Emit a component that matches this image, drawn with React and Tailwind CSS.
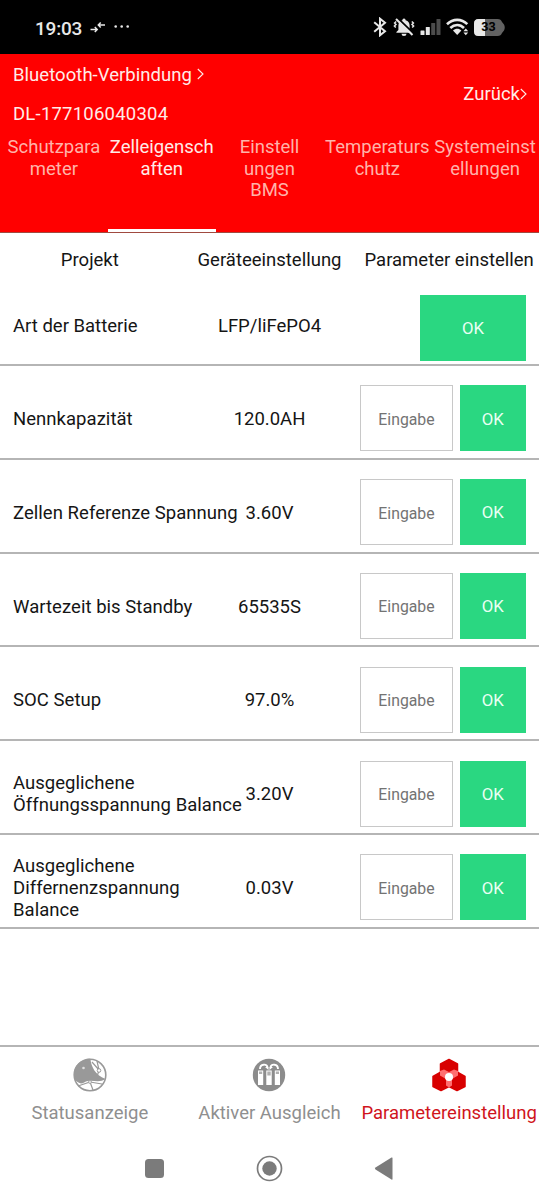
import React, { useState } from 'react';
import clsx from 'clsx';

const TABS = [
  'Schutzpara\nmeter',
  'Zelleigensch\naften',
  'Einstell\nungen\nBMS',
  'Temperaturs\nchutz',
  'Systemeinst\nellungen',
];

const COLUMNS = ['Projekt', 'Geräteeinstellung', 'Parameter einstellen'];

const SETTINGS = [
  { label: 'Nennkapazität', value: '120.0AH' },
  { label: 'Zellen Referenze Spannung', value: '3.60V' },
  { label: 'Wartezeit bis Standby', value: '65535S' },
  { label: 'SOC Setup', value: '97.0%' },
  { label: 'Ausgeglichene\nÖffnungsspannung Balance', value: '3.20V' },
  { label: 'Ausgeglichene\nDiffernenzspannung\nBalance', value: '0.03V' },
];

function StatusBar() {
  return (
    <div className="h-[54px] shrink-0 bg-black text-[#e8e8e8] flex items-center justify-between pl-[35px] pr-[34px]">
      <div className="flex items-center">
        <span className="mt-[2px] text-[19px] font-medium leading-none tracking-[-0.2px]">19:03</span>
        <svg className="ml-2 w-4 h-4" viewBox="0 0 16 16" fill="none" stroke="currentColor" strokeWidth="1.5">
          <path d="M0.5 10.5H7M4.8 8L7.2 10.5L4.8 13" />
          <path d="M15 6H8.5M10.7 3.5L8.3 6L10.7 8.5" />
        </svg>
        <svg className="ml-2 w-4 h-4" viewBox="0 0 16 16" fill="currentColor">
          <circle cx="1.7" cy="7.5" r="1.3" />
          <circle cx="7.7" cy="7.5" r="1.3" />
          <circle cx="13.7" cy="7.5" r="1.3" />
        </svg>
      </div>

      <div className="flex items-center">
        {/* Bluetooth */}
        <svg className="w-[14px] h-5" viewBox="0 0 14 20" fill="none" stroke="currentColor" strokeWidth="2">
          <path d="M1.2 5.2L12 14.3L7 18.3V1.7L12 5.7L1.2 14.8" />
        </svg>
        {/* Muted bell */}
        <svg className="ml-[6px] w-[22px] h-5" viewBox="0 0 22 20">
          <path d="M11 1.5a1.6 1.6 0 0 1 1.600 1.700C15.400 4 16.600 6 16.600 8.600V13l2 2v.8H3.400V15l2-2V8.600C5.400 6 6.600 4 9.400 3.200A1.600 1.600 0 0 1 11 1.500zM8.500 16.700h5a2.500 2.300 0 0 1-5 0z" fill="currentColor" />
          <path d="M3.200 4.500L1.600 6L3 7.500L1.400 9L2.800 10.500M18.800 4.500L20.400 6L19 7.500L20.600 9L19.200 10.500" fill="none" stroke="currentColor" strokeWidth="1.500" />
          <path d="M4.800 1.200L21 16.900" stroke="black" strokeWidth="2" />
          <path d="M3 2L19.500 18" stroke="currentColor" strokeWidth="2" />
        </svg>
        {/* Signal */}
        <svg className="ml-[5px] w-[21px] h-5" viewBox="0 0 21 20" fill="currentColor">
          <rect x="0.500" y="13.500" width="4" height="4.500" rx="0.500" />
          <rect x="5.800" y="10" width="4" height="8" rx="0.500" />
          <rect x="11.200" y="6" width="4" height="12" rx="0.500" fill="#4c4c4c" />
          <rect x="16.500" y="2" width="4" height="16" rx="0.500" fill="#4c4c4c" />
        </svg>
        {/* Wifi */}
        <svg className="ml-[5px] w-[23px] h-5" viewBox="0 0 23 20">
          <g fill="none" stroke="currentColor" strokeWidth="2.600">
            <path d="M1 7.200C7 1.400 15.500 1.400 21.300 7.200" />
            <path d="M4.300 11C8.500 7 14 7 18 11" />
          </g>
          <path d="M7 13.600C9.500 11.200 12.900 11.200 15.400 13.600L11.200 18z" fill="currentColor" />
          <path d="M17.400 14.200L19.800 11.600L22.200 14.200zM17.400 15.600L19.800 18.200L22.200 15.600z" fill="currentColor" />
        </svg>
        {/* Battery */}
        <div className="relative ml-[5px] w-[31px] h-[17px]">
          <svg className="w-full h-full" viewBox="0 0 31 17">
            <path d="M4.500 0H23.500C26 0 27.300 1 28 3L30 5.500C31 7.500 31 9.500 30 11.500L28 14C27.300 16 26 17 23.500 17H4.500Q0 17 0 12.500V4.500Q0 0 4.500 0z" fill="#626262" />
            <path d="M4.500 0H11V17H4.500Q0 17 0 12.500V4.500Q0 0 4.500 0z" fill="#e8e8e8" />
          </svg>
          <span className="absolute inset-0 pr-[2px] flex items-center justify-center text-[12.5px] font-bold leading-none text-black">33</span>
        </div>
      </div>
    </div>
  );
}

function Chevron({ className }) {
  return (
    <svg className={clsx('w-[7px] h-3', className)} viewBox="0 0 7 12" fill="none" stroke="currentColor" strokeWidth="1.1">
      <path d="M0.800 1L6 6L0.800 11" />
    </svg>
  );
}

function Header({ active, onSelect }) {
  return (
    <header className="h-[179px] shrink-0 bg-[#ff0000] border-b border-[#a04a40] text-[#ffece8] flex flex-col">
      <div className="h-20 flex justify-between pl-[13px] pr-3">
        <div className="pt-[2px]">
          <div className="h-[39px] flex items-center">
            <span className="tracking-[0.04px]">Bluetooth-Verbindung</span>
            <Chevron className="ml-[5px] mb-[3px]" />
          </div>
          <div className="h-10 flex items-center tracking-[0.22px]">DL-177106040304</div>
        </div>
        <button className="flex items-center pt-[2px]">
          Zurück
          <Chevron className="mb-[3px]" />
        </button>
      </div>
      <nav className="flex-1 grid grid-cols-5">
        {TABS.map((tab, i) => (
          <button
            key={tab}
            onClick={() => onSelect(i)}
            className={clsx(
              'flex justify-center pt-[3px] border-b-3 whitespace-pre text-center',
              i === active ? 'border-white text-[#ffece8]' : 'border-transparent text-[#ffb3aa]'
            )}
          >
            {tab}
          </button>
        ))}
      </nav>
    </header>
  );
}

function OkButton({ className }) {
  return (
    <button className={clsx('h-[66px] bg-[#2ad781] text-[#e9fff3] text-[16.800px] flex items-center justify-center pt-[2px]', className)}>
      OK
    </button>
  );
}

function SettingRow({ label, value }) {
  return (
    <div className="h-[93.800px] shrink-0 border-b-2 border-[#b5b5b5] flex items-center pt-[13px] px-[13px]">
      <div className="mt-[3px] w-[167px] whitespace-pre tracking-[0.04px]">{label}</div>
      <div className="mt-[3px] w-[179px] text-center">{value}</div>
      <input
        placeholder="Eingabe"
        className="ml-[1px] w-[93px] h-[66px] pt-[2px] border border-[#c8c8c8] text-center text-[15.800px] placeholder:text-[#737373] outline-none"
      />
      <OkButton className="ml-auto w-[66.500px]" />
    </div>
  );
}

function StatusIcon() {
  return (
    <svg className="w-[34px] h-[34px]" viewBox="0 0 34 34" fill="none">
      <path d="M10 2.500C13 1 16 .5 17.500 1C18 8 22 17 32.500 21C27 25 20 22 15 23C12 23.500 10 25.500 8 25.500C5 25 3 23 1.500 21C-.5 13 3 5.500 10 2.500z" fill="#999" />
      <circle cx="17" cy="17" r="15.800" stroke="#999" strokeWidth="1.600" />
      <path d="M24 3L26 12L24 19M26 12L19 4M5 28L17 24L20 32M17 24L29 26" stroke="#999" strokeWidth="1.200" />
      <circle cx="26" cy="12.500" r="1.800" fill="white" stroke="#999" />
      <circle cx="10.500" cy="10" r="1.300" fill="#e0e0e0" />
      <circle cx="17" cy="24" r="1.600" fill="#ddd" stroke="#999" strokeWidth="0.600" />
    </svg>
  );
}

function BalanceIcon() {
  return (
    <svg className="w-[34px] h-[34px]" viewBox="0 0 34 34" fill="none">
      <circle cx="17" cy="17" r="16.200" fill="#8c8c8c" />
      <path d="M8 11C8 5.500 15 5.500 15.500 9.500M26 11C26 5.500 19 5.500 18.500 9.500" stroke="white" strokeWidth="1.900" />
      <path d="M13 9H16.500V12zM21 9H17.500V12z" fill="white" />
      <path d="M6 12.500H11.200V27H6zM14.300 12.500H19.700V27H14.300zM22.800 12.500H28V27H22.800z" fill="white" />
      <path d="M7 13.500H10.200V16H7zM15.300 13.500H18.700V17.500H15.300zM23.800 13.500H27V16H23.800z" fill="#b0b0b0" />
    </svg>
  );
}

function ParameterIcon() {
  return (
    <svg className="w-[34px] h-[34px]" viewBox="0 0 34 34" strokeLinejoin="round">
      <g fill="#d80000" stroke="#d80000" strokeWidth="1.500">
        <path d="M17 1.500L25.500 6V16L17 20.500L8.500 16V6z" />
        <path d="M9 14L17 18.500V28.500L9 32.500L1 28.500V18.500z" />
        <path d="M25 14L33 18.500V28.500L25 32.500L17 28.500V18.500z" />
      </g>
      <path d="M8 13L12 11.500L17 14L22 11.500L26 13V17.500L20 21V27.500L17 29.500L14 27.500V21L8 17.500z" fill="#ff6f70" />
      <circle cx="17" cy="19" r="4" fill="white" />
    </svg>
  );
}

const NAV = [
  { label: 'Statusanzeige', Icon: StatusIcon },
  { label: 'Aktiver Ausgleich', Icon: BalanceIcon },
  { label: 'Parametereinstellung', Icon: ParameterIcon, active: true },
];

function BottomNav() {
  return (
    <nav className="mt-auto h-[91px] shrink-0 border-t-2 border-[#b5b5b5] grid grid-cols-3">
      {NAV.map(({ label, Icon, active }) => (
        <button
          key={label}
          className={clsx('flex flex-col items-center pt-[11px] whitespace-nowrap', active ? 'text-[#d0141c]' : 'text-[#8f8f8f]')}
        >
          <Icon />
          <span className="mt-[11px]">{label}</span>
        </button>
      ))}
    </nav>
  );
}

function SystemBar() {
  return (
    <div className="h-16 shrink-0 flex justify-center pt-[19px] gap-[88px] text-[#7b7b7b]">
      <svg className="w-[27px] h-[27px]" viewBox="0 0 27 27" fill="currentColor">
        <rect x="4" y="4" width="19" height="19" rx="3.500" />
      </svg>
      <svg className="w-[27px] h-[27px]" viewBox="0 0 27 27" fill="none" stroke="currentColor">
        <circle cx="13.500" cy="13.500" r="12" strokeWidth="1.700" />
        <circle cx="13.500" cy="13.500" r="7.200" fill="currentColor" stroke="none" />
      </svg>
      <svg className="w-[27px] h-[27px]" viewBox="0 0 27 27" fill="currentColor">
        <path d="M21.500 3V24Q21.500 25 20.500 24.400L4.500 14.500Q3.300 13.500 4.500 12.500L20.500 2.600Q21.500 2 21.500 3z" />
      </svg>
    </div>
  );
}

export default function App() {
  const [activeTab, setActiveTab] = useState(1);

  return (
    <div className="w-full h-[1200px] bg-white text-[#151515] font-['Roboto',sans-serif] text-[18.500px] leading-[21.700px] flex flex-col overflow-hidden">
      <StatusBar />
      <Header active={activeTab} onSelect={setActiveTab} />

      <main className="flex flex-col">
        <div className="h-[54px] pt-[2px] grid grid-cols-3 items-center text-center whitespace-nowrap">
          {COLUMNS.map((name) => (
            <div key={name}>{name}</div>
          ))}
        </div>

        <div className="h-[79px] shrink-0 border-b-2 border-[#b5b5b5] flex items-center px-[13px]">
          <div className="mt-[2px] w-[167px]">Art der Batterie</div>
          <div className="mt-[2px] w-[179px] text-center">LFP/liFePO4</div>
          <OkButton className="ml-auto mt-[4px] w-[106px]" />
        </div>

        {SETTINGS.map((row) => (
          <SettingRow key={row.label} label={row.label} value={row.value} />
        ))}
      </main>

      <BottomNav />
      <SystemBar />
    </div>
  );
}
